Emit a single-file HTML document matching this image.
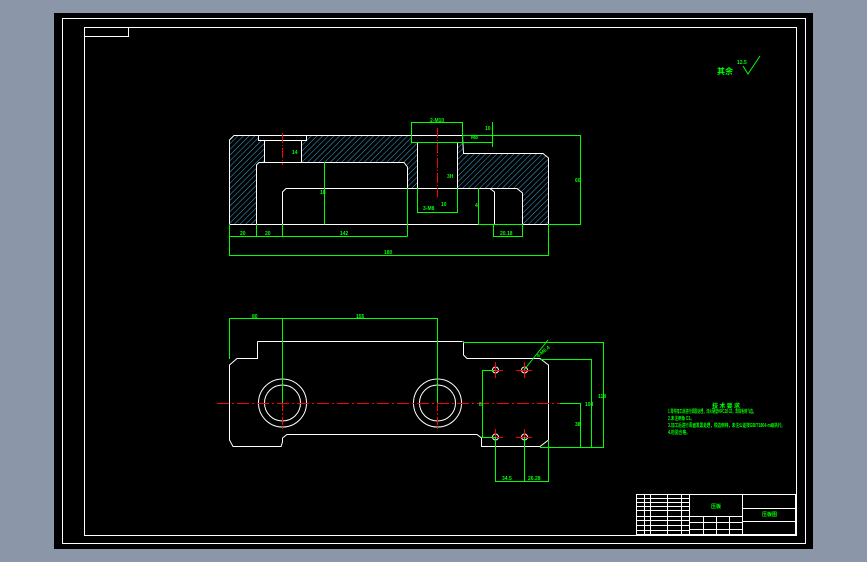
<!DOCTYPE html>
<html><head><meta charset="utf-8"><style>
html,body{margin:0;padding:0;width:867px;height:562px;overflow:hidden;background:#8b97a8}
svg{display:block}
text{font-family:"Liberation Sans","Noto Sans CJK SC",sans-serif;fill:#00ff00;font-size:5px;font-weight:bold}
</style></head><body>
<svg width="867" height="562" viewBox="0 0 867 562" xmlns="http://www.w3.org/2000/svg">
<defs>
<pattern id="h" width="4" height="4" patternUnits="userSpaceOnUse" patternTransform="rotate(45)">
<line x1="0" y1="0" x2="0" y2="4" stroke="#3aa8d8" stroke-width="1"/>
</pattern>
</defs>
<rect x="54" y="13" width="759" height="536" fill="#000"/>
<g fill="none" stroke="#fff" stroke-width="1">
<rect x="62.5" y="18.5" width="743" height="525"/>
<rect x="84.5" y="27.5" width="712" height="508"/>
<polyline points="84.5,36.5 128.5,36.5 128.5,27.5"/>
</g>
<g fill="url(#h)" stroke="none">
<polygon points="229,140 234,135 258,135 258,140 264,140 264,162 256,165 256,224 229,224"/>
<polygon points="301,140 306,140 306,135 412,135 412,142 417,142 417,188 408,188 407,168 404,162 301,162"/>
<polygon points="457,142 462,142 463,153 543,153 548,158 548,224 522,224 522,192 517,188 457,188"/>
</g>
<g fill="none" stroke="#fff" stroke-width="1">
<polyline points="229.5,224.5 229.5,140 234,135.5 412,135.5"/>
<polyline points="258.5,135.5 258.5,140.5 306.5,140.5 306.5,135.5"/>
<polyline points="264.5,140.5 264.5,162.5 301.5,162.5 301.5,140.5"/>
<rect x="411.5" y="135.5" width="51" height="7"/>
<polyline points="462.5,135.5 463.5,153.5 543,153.5 548.5,158 548.5,224.5 229.5,224.5"/>
<polyline points="256.5,224.5 256.5,165 259,162.5 404,162.5 407.5,167 407.5,188"/>
<polyline points="282.5,224.5 282.5,192 286,188.5 517,188.5 522.5,193 522.5,224.5"/>
<polyline points="490,188.5 494.5,192 494.5,224.5"/>
<line x1="417.5" y1="142.5" x2="417.5" y2="188.5"/>
<line x1="457.5" y1="142.5" x2="457.5" y2="188.5"/>
</g>
<g stroke="#f00" stroke-width="1" stroke-dasharray="10,2,1,2">
<line x1="282.5" y1="133" x2="282.5" y2="165"/>
<line x1="437.5" y1="128" x2="437.5" y2="197"/>
</g>
<g fill="none" stroke="#0f0" stroke-width="1">
<polyline points="324.5,162 324.5,224.5"/>
<polyline points="229.5,224 229.5,255.5 548.5,255.5 548.5,224"/>
<line x1="229.5" y1="236.5" x2="407.5" y2="236.5"/>
<line x1="256.5" y1="224" x2="256.5" y2="236.5"/>
<line x1="282.5" y1="224" x2="282.5" y2="236.5"/>
<line x1="407.5" y1="188" x2="407.5" y2="236.5"/>
<polyline points="463,135.5 580.5,135.5 580.5,224.5 548,224.5"/>
<rect x="411.5" y="122.5" width="51" height="20"/>
<polyline points="417.5,188 417.5,212.5 457.5,212.5 457.5,188"/>
<polyline points="478.5,188 478.5,224.5 494,224.5"/>
<rect x="493.5" y="224.5" width="29" height="12"/>
<line x1="492.5" y1="122" x2="492.5" y2="147"/>
<line x1="462" y1="142.5" x2="493" y2="142.5"/>
</g>
<text x="430" y="122">2-M10</text><text x="485" y="130">10</text><text x="471" y="139">M8</text>
<text x="292" y="154">14</text><text x="320" y="194">18</text><text x="447" y="178">3H</text>
<text x="423" y="210">3-M8</text><text x="441" y="206">10</text><text x="475" y="207">4</text>
<text x="575" y="182">60</text><text x="240" y="235">20</text><text x="265" y="235">20</text>
<text x="340" y="235">142</text><text x="500" y="235">20.18</text><text x="384" y="254">180</text>
<g fill="none" stroke="#fff" stroke-width="1">
<polyline points="257.5,341.5 462.5,341.5"/>
<polyline points="257.5,341.5 257.5,358.5 237,358.5 229.5,365 229.5,440 233,446.5 281,446.5 282.5,442 282.5,438 287,434.5 477,434.5 481.5,438 481.5,446.5 540,446.5 548.5,440 548.5,365 540,358.5 467,358.5 463.5,355 463.5,341.5"/>
<circle cx="282.5" cy="403" r="24"/><circle cx="282.5" cy="403" r="18"/>
<circle cx="437.5" cy="403" r="24"/><circle cx="437.5" cy="403" r="18"/>
<circle cx="495.5" cy="370" r="3"/><circle cx="524.5" cy="370" r="3"/>
<circle cx="495.5" cy="437" r="3"/><circle cx="524.5" cy="437" r="3"/>
</g>
<g stroke="#f00" stroke-width="1">
<line x1="217" y1="403.5" x2="560" y2="403.5" stroke-dasharray="12,3,2,3"/>
<line x1="282.5" y1="375" x2="282.5" y2="430" stroke-dasharray="8,2,2,2"/>
<line x1="437.5" y1="375" x2="437.5" y2="430" stroke-dasharray="8,2,2,2"/>
<path d="M487 370.5h16M516 370.5h16M487 437.5h16M516 437.5h16M495.5 362v16M524.5 362v16M495.5 429v16M524.5 429v16"/>
</g>
<g fill="none" stroke="#0f0" stroke-width="1">
<polyline points="229.5,359 229.5,318.5 437.5,318.5 437.5,403"/>
<line x1="282.5" y1="318.5" x2="282.5" y2="403"/>
<polyline points="463,342.5 603.5,342.5 603.5,447.5 540,447.5"/>
<polyline points="540,359.5 591.5,359.5 591.5,447.5"/>
<polyline points="560,403.5 580.5,403.5 580.5,447.5"/>
<polyline points="495,370.5 482.5,370.5 482.5,437.5 495,437.5"/>
<polyline points="495.5,437 495.5,481.5 548.5,481.5 548.5,440"/>
<line x1="524.5" y1="437" x2="524.5" y2="481.5"/>
<line x1="524" y1="370" x2="548" y2="340"/>
</g>
<text x="252" y="318">80</text><text x="356" y="318">155</text><text x="479" y="406">8</text>
<text x="575" y="426">38</text><text x="585" y="406">104</text><text x="598" y="398">118</text>
<text x="502" y="480">34.5</text><text x="528" y="480">26.28</text>
<text x="531" y="354" transform="rotate(-40 540 346)">4-M6.4</text>
<text x="717" y="74" style="font-size:8px">其余</text><text x="737" y="64">12.5</text>
<path d="M743 66l5 8 12-18" fill="none" stroke="#0f0" stroke-width="1"/>
<text x="712" y="408" style="font-size:6px" textLength="28">技术要求</text>
<text x="668" y="413" textLength="88" lengthAdjust="spacingAndGlyphs">1.零件加工前进行调质处理，淬火硬度HRC28-32，去除毛刺飞边。</text>
<text x="668" y="420" textLength="26" lengthAdjust="spacingAndGlyphs">2.未注倒角 C1。</text>
<text x="668" y="427" textLength="117" lengthAdjust="spacingAndGlyphs">3.加工后进行表面发黑处理，锐边倒钝，未注公差按GB/T1804-m级执行。</text>
<text x="668" y="434" textLength="22" lengthAdjust="spacingAndGlyphs">4.检验合格。</text>
<g fill="none" stroke="#fff" stroke-width="1">
<rect x="636.5" y="494.5" width="159" height="40"/>
<path d="M644.5 494.5v40M650.5 494.5v40M667.5 494.5v40M681.5 494.5v40M689.5 494.5v40M742.5 494.5v40M636.5 498.5h53M636.5 502.5h53M636.5 506.5h53M636.5 510.5h53M636.5 516.5h106M636.5 520.5h53M636.5 525.5h53M636.5 530.5h53M689.5 522.5h53M689.5 529.5h53M703.5 516.5v18M716.5 516.5v18M729.5 516.5v18M742.5 508.5h53M742.5 521.5h53"/>
</g>
<text x="711" y="508">压板</text><text x="762" y="516">压板图</text>
</svg>
</body></html>
